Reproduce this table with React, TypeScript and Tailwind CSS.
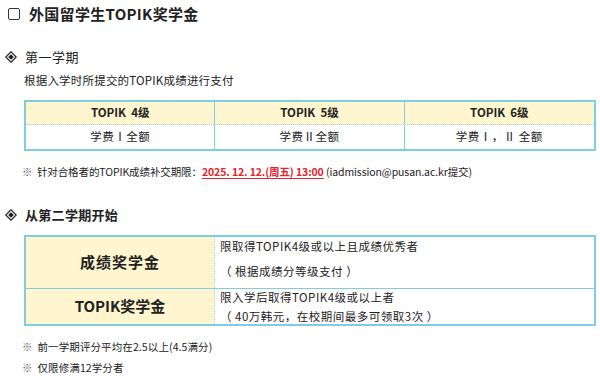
import React from "react";

const font = { fontFamily: '"Noto Sans CJK SC", "Noto Sans", sans-serif' };

function Diamond() {
  return (
    <svg width="12" height="12" viewBox="0 0 12 12" className="shrink-0">
      <path d="M6 0.8 L11.2 6 L6 11.2 L0.8 6 Z" fill="none" stroke="#222" strokeWidth="1.2" />
      <path d="M6 3.2 L8.8 6 L6 8.8 L3.2 6 Z" fill="#222" />
    </svg>
  );
}

export default function App() {
  return (
    <div className="w-[600px] h-[380px] bg-white text-[#222] overflow-hidden" style={font}>
      {/* Title */}
      <div className="flex items-center h-[26px] pt-[1px] pl-[8px]">
        <div className="w-[12px] h-[12px] border-[1.5px] border-[#333] rounded-[2px] mr-[9px]" />
        <div className="text-[15px] font-bold leading-[20px] tracking-[0.3px]">外国留学生TOPIK奖学金</div>
      </div>

      {/* Section 1 */}
      <div className="flex items-center h-[20px] mt-[21px] pl-[5px]">
        <Diamond />
        <span className="ml-[8px] text-[13px] leading-[18px] tracking-[0.5px]">第一学期</span>
      </div>
      <div className="pl-[24px] mt-[3px] text-[11.5px] leading-[20px] tracking-[0.2px]">
        根据入学时所提交的TOPIK成绩进行支付
      </div>

      {/* Table 1 */}
      <div className="ml-[24px] mr-[4px] mt-[10px] border-2 border-[#7dcde3] text-[11.5px]">
        <div className="grid grid-cols-3 bg-[#fff6cf] border-b border-dotted border-[#9bd7e8] h-[23px] font-bold">
          <div className="flex items-center justify-center border-r border-[#7dcde3]">TOPIK&nbsp;&nbsp;4级</div>
          <div className="flex items-center justify-center border-r border-[#7dcde3]">TOPIK&nbsp;&nbsp;5级</div>
          <div className="flex items-center justify-center">TOPIK&nbsp;&nbsp;6级</div>
        </div>
        <div className="grid grid-cols-3 h-[24px] tracking-[0.5px]">
          <div className="flex items-center justify-center border-r border-[#7dcde3]">学费Ⅰ全额</div>
          <div className="flex items-center justify-center border-r border-[#7dcde3]">学费Ⅱ全额</div>
          <div className="flex items-center justify-center">学费Ⅰ，Ⅱ&nbsp;全额</div>
        </div>
      </div>

      {/* Note */}
      <div className="pl-[22px] mt-[11px] text-[10.5px] leading-[20px] tracking-[-0.1px] whitespace-nowrap">
        <span className="text-[#555]">※</span>&nbsp;&nbsp;针对合格者的TOPIK成绩补交期限：
        <span className="text-[#e8202a] font-bold underline underline-offset-2">2025. 12. 12.(周五) 13:00</span>
        <span> (iadmission@pusan.ac.kr提交)</span>
      </div>

      {/* Section 2 */}
      <div className="flex items-center h-[20px] mt-[23px] pl-[5px]">
        <Diamond />
        <span className="ml-[8px] text-[13px] font-bold leading-[18px] tracking-[0.3px]">从第二学期开始</span>
      </div>

      {/* Table 2 */}
      <div className="ml-[24px] mr-[4px] mt-[10px] border-2 border-[#7dcde3] text-[11.5px]">
        <div className="flex h-[52px] border-b border-[#7dcde3]">
          <div className="w-[189px] shrink-0 bg-[#fff6cf] flex items-center justify-center border-r border-dotted border-[#9bd7e8] text-[15px] font-bold tracking-[1px]">
            成绩奖学金
          </div>
          <div className="flex flex-col pl-[5px] tracking-[0.5px] leading-[18px]">
            <div>限取得TOPIK4级或以上且成绩优秀者</div>
            <div className="mt-[7px]">（ 根据成绩分等级支付 ）</div>
          </div>
        </div>
        <div className="flex h-[35px]">
          <div className="w-[189px] shrink-0 bg-[#fff6cf] flex items-center justify-center border-r border-dotted border-[#9bd7e8] text-[15px] font-bold">
            TOPIK奖学金
          </div>
          <div className="flex flex-col pl-[5px] tracking-[0.5px] leading-[17px]">
            <div>限入学后取得TOPIK4级或以上者</div>
            <div className="mt-[2px]">（ 40万韩元，在校期间最多可领取3次 ）</div>
          </div>
        </div>
      </div>

      {/* Notes */}
      <div className="pl-[22px] mt-[10px] text-[10.5px] leading-[21px] tracking-[0.1px]">
        <div><span className="text-[#555]">※</span>&nbsp;&nbsp;前一学期评分平均在2.5以上(4.5满分)</div>
        <div><span className="text-[#555]">※</span>&nbsp;&nbsp;仅限修满12学分者</div>
      </div>
    </div>
  );
}
